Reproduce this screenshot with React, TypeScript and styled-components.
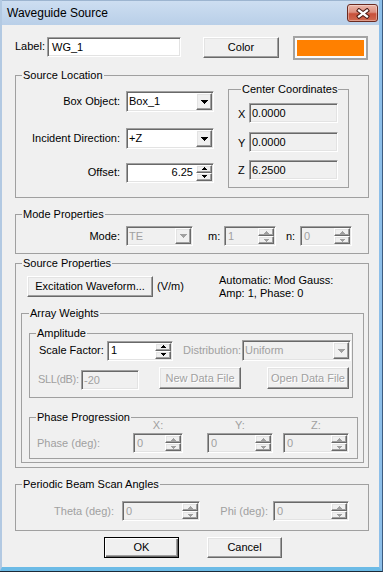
import React from "react";
import styled, { createGlobalStyle, css } from "styled-components";

const GlobalStyle = createGlobalStyle`
  html, body { margin: 0; padding: 0; background: #ffffff; }
  body {
    font-family: "Liberation Sans", Arial, sans-serif;
    font-size: 11px;
    line-height: 13px;
    color: #000;
  }
  #root { width: 383px; height: 572px; }
  *, *::before, *::after { box-sizing: border-box; }
`;

const DISABLED = "#a0a0a0";

const raised = css`
  border: 1px solid;
  border-color: #ffffff #696969 #696969 #ffffff;
  box-shadow: inset -1px -1px 0 #a0a0a0, inset 1px 1px 0 #e3e3e3;
  background: #f0f0f0;
`;

const sunken = css`
  border: 1px solid;
  border-color: #a0a0a0 #ffffff #ffffff #a0a0a0;
  box-shadow: inset 1px 1px 0 #696969, inset -1px -1px 0 #e3e3e3;
`;

const Frame = styled.div`
  width: 383px;
  height: 572px;
  border-right: 1px solid #3d5c80;
  border-bottom: 1px solid #1d2a38;
`;

const Window = styled.div`
  height: 100%;
  display: flex;
  flex-direction: column;
  border-left: 2px solid #b2c9e2;
  border-right: 3px solid #8dbfe9;
  border-bottom: 4px solid #6cbbe6;
  background: #f0f0f0;
`;

const TitleBar = styled.div`
  flex: none;
  height: 25px;
  display: flex;
  align-items: flex-start;
  background: linear-gradient(#cddef1, #b9cfe8);
  border-top: 1px solid #9db5d0;
`;

const TitleText = styled.div`
  padding: 5px 0 0 5px;
  font-size: 12px;
  line-height: 15px;
  color: #000;
`;

const CloseButton = styled.div`
  margin: 3px 1px 0 auto;
  width: 31px;
  height: 18px;
  border: 1px solid #6b2a20;
  border-radius: 3px;
  background: linear-gradient(#ebb7aa 0%, #dc8f7f 45%, #c8503a 55%, #d06a50 100%);
  box-shadow: inset 0 0 0 1px rgba(255, 255, 255, 0.35);
  display: flex;
  align-items: center;
  justify-content: center;
`;

const Client = styled.div`
  flex: 1;
  display: flex;
  flex-direction: column;
  align-items: flex-start;
  padding: 11px 0 0 13px;
`;

const Row = styled.div<{ $mt?: number; $ml?: number; $h?: number; $align?: string }>`
  display: flex;
  align-items: ${(p) => p.$align ?? "center"};
  height: ${(p) => (p.$h ? `${p.$h}px` : "auto")};
  margin: ${(p) => p.$mt ?? 0}px 0 0 ${(p) => p.$ml ?? 0}px;
`;

const Stack = styled.div<{ $mt?: number }>`
  flex: none;
  display: flex;
  flex-direction: column;
  margin-top: ${(p) => p.$mt ?? 0}px;
`;

const GroupBody = styled.div`
  display: flex;
  align-items: flex-start;
`;

const Label = styled.span<{
  $w?: number;
  $align?: "left" | "right" | "center";
  $disabled?: boolean;
  $ml?: number;
  $mt?: number;
  $ls?: number;
}>`
  flex: none;
  width: ${(p) => (p.$w !== undefined ? `${p.$w}px` : "auto")};
  margin-left: ${(p) => p.$ml ?? 0}px;
  margin-top: ${(p) => p.$mt ?? 0}px;
  text-align: ${(p) => p.$align ?? "left"};
  letter-spacing: ${(p) => p.$ls ?? 0}px;
  color: ${(p) => (p.$disabled ? DISABLED : "#000")};
  white-space: nowrap;
`;

const Edit = styled.div<{
  $w: number;
  $h?: number;
  $ml?: number;
  $mt?: number;
  $pl?: number;
  $disabled?: boolean;
  $readOnly?: boolean;
}>`
  ${sunken}
  flex: none;
  width: ${(p) => p.$w}px;
  height: ${(p) => p.$h ?? 20}px;
  margin-left: ${(p) => p.$ml ?? 0}px;
  margin-top: ${(p) => p.$mt ?? 0}px;
  padding: 0 2px 0 ${(p) => p.$pl ?? 2}px;
  display: flex;
  align-items: center;
  background: ${(p) => (p.$disabled || p.$readOnly ? "#f0f0f0" : "#ffffff")};
  color: ${(p) => (p.$disabled ? DISABLED : "#000")};
  white-space: nowrap;
  overflow: hidden;
`;

const ComboBox = styled.div<{ $w: number; $h?: number; $ml?: number; $disabled?: boolean }>`
  ${sunken}
  flex: none;
  width: ${(p) => p.$w}px;
  height: ${(p) => p.$h ?? 21}px;
  margin-left: ${(p) => p.$ml ?? 0}px;
  padding: 1px;
  display: flex;
  align-items: stretch;
  background: ${(p) => (p.$disabled ? "#f0f0f0" : "#ffffff")};
`;

const ComboValue = styled.span<{ $disabled?: boolean }>`
  flex: 1;
  display: flex;
  align-items: center;
  padding-left: 1px;
  color: ${(p) => (p.$disabled ? DISABLED : "#000")};
  white-space: nowrap;
`;

const DropButton = styled.span`
  ${raised}
  flex: none;
  width: 16px;
  display: flex;
  align-items: center;
  justify-content: center;
`;

const SpinBox = styled.div<{ $w: number; $ml?: number; $disabled?: boolean }>`
  ${sunken}
  flex: none;
  width: ${(p) => p.$w}px;
  height: 20px;
  margin-left: ${(p) => p.$ml ?? 0}px;
  padding: 1px;
  display: flex;
  background: ${(p) => (p.$disabled ? "#f0f0f0" : "#ffffff")};
`;

const SpinValue = styled.span<{ $right?: boolean; $disabled?: boolean }>`
  flex: 1;
  display: flex;
  align-items: center;
  justify-content: ${(p) => (p.$right ? "flex-end" : "flex-start")};
  padding: 0 3px 0 2px;
  color: ${(p) => (p.$disabled ? DISABLED : "#000")};
  white-space: nowrap;
`;

const SpinButtons = styled.span`
  flex: none;
  width: 16px;
  display: flex;
  flex-direction: column;
`;

const SpinButton = styled.span`
  ${raised}
  flex: 1;
  display: flex;
  align-items: center;
  justify-content: center;
`;

const PushButton = styled.button<{
  $w: number;
  $h?: number;
  $ml?: number;
  $mt?: number;
  $default?: boolean;
}>`
  ${raised}
  flex: none;
  width: ${(p) => p.$w}px;
  height: ${(p) => p.$h ?? 21}px;
  margin: ${(p) => p.$mt ?? 0}px 0 0 ${(p) => p.$ml ?? 0}px;
  padding: 0;
  font-family: inherit;
  font-size: 11px;
  line-height: 13px;
  color: #000;
  white-space: nowrap;
  ${(p) =>
    p.$default &&
    css`
      border-color: #000;
      box-shadow: inset 1px 1px 0 #ffffff, inset -1px -1px 0 #696969, inset -2px -2px 0 #a0a0a0;
    `}
  &:disabled {
    color: ${DISABLED};
    text-shadow: 1px 1px 0 #ffffff;
  }
`;

const Swatch = styled.div<{ $ml?: number }>`
  flex: none;
  width: 75px;
  height: 24px;
  margin-left: ${(p) => p.$ml ?? 0}px;
  padding: 2px;
  border: 2px solid #a3a3a3;
  background: #fbfbfb;
`;

const SwatchFill = styled.div<{ $color: string }>`
  width: 100%;
  height: 100%;
  background: ${(p) => p.$color};
`;

const Group = styled.fieldset<{ $w: number; $mt?: number; $ml?: number; $pb?: number }>`
  flex: none;
  width: ${(p) => p.$w}px;
  margin: ${(p) => p.$mt ?? 0}px 0 0 ${(p) => p.$ml ?? 0}px;
  padding: 0 0 ${(p) => p.$pb ?? 0}px 0;
  border: 1px solid #a0a0a0;
  min-inline-size: 0;
`;

const Legend = styled.legend<{ $ml?: number }>`
  margin-left: ${(p) => p.$ml ?? 6}px;
  padding: 0 1px;
  height: 13px;
  font-size: 11px;
  line-height: 13px;
  color: #000;
`;

const InfoText = styled.div`
  line-height: 13px;
  white-space: nowrap;
`;

const DownArrow = ({ color = "#000" }: { color?: string }) => (
  <svg width="7" height="4" viewBox="0 0 7 4" shapeRendering="crispEdges">
    <path d="M0 0h7v1h-1v1h-1v1h-1v1h-1v-1h-1v-1h-1v-1h-1z" fill={color} />
  </svg>
);

const SmallArrow = ({ up, color }: { up?: boolean; color: string }) => (
  <svg width="5" height="3" viewBox="0 0 5 3" shapeRendering="crispEdges">
    {up ? (
      <path d="M2 0h1v1h1v1h1v1h-5v-1h1v-1h1z" fill={color} />
    ) : (
      <path d="M0 0h5v1h-1v1h-1v1h-1v-1h-1v-1h-1z" fill={color} />
    )}
  </svg>
);

const Combo = ({ w, h, ml, value, disabled }: { w: number; h?: number; ml?: number; value: string; disabled?: boolean }) => (
  <ComboBox $w={w} $h={h} $ml={ml} $disabled={disabled}>
    <ComboValue $disabled={disabled}>{value}</ComboValue>
    <DropButton>
      <DownArrow color={disabled ? DISABLED : "#000"} />
    </DropButton>
  </ComboBox>
);

const Spin = ({ w, ml, value, disabled, right }: { w: number; ml?: number; value: string; disabled?: boolean; right?: boolean }) => (
  <SpinBox $w={w} $ml={ml} $disabled={disabled}>
    <SpinValue $right={right} $disabled={disabled}>{value}</SpinValue>
    <SpinButtons>
      <SpinButton>
        <SmallArrow up color={disabled ? DISABLED : "#000"} />
      </SpinButton>
      <SpinButton>
        <SmallArrow color={disabled ? DISABLED : "#000"} />
      </SpinButton>
    </SpinButtons>
  </SpinBox>
);

export default function App() {
  return (
    <>
      <GlobalStyle />
      <Frame>
        <Window>
          <TitleBar>
            <TitleText>Waveguide Source</TitleText>
            <CloseButton>
              <svg width="14" height="11" viewBox="0 0 14 11">
                <path d="M3 2.5 L11 8.5 M11 2.5 L3 8.5" stroke="#4a1a14" strokeWidth="4.2" strokeLinecap="square" fill="none" />
                <path d="M3 2.5 L11 8.5 M11 2.5 L3 8.5" stroke="#ffffff" strokeWidth="2.2" strokeLinecap="square" fill="none" />
              </svg>
            </CloseButton>
          </TitleBar>
          <Client>
            <Row $h={24} $align="flex-start">
              <Label $w={32} $mt={4}>Label:</Label>
              <Edit $w={134} $mt={1} $pl={4}>WG_1</Edit>
              <PushButton $w={76} $ml={22} $mt={1}>Color</PushButton>
              <Swatch $ml={14}>
                <SwatchFill $color="#ff8000" />
              </Swatch>
            </Row>

            <Group $w={354} $mt={9} $pb={9}>
              <Legend>Source Location</Legend>
              <GroupBody>
                <Stack $mt={9}>
                  <Row $h={21}>
                    <Label $w={104} $align="right">Box Object:</Label>
                    <Combo w={88} ml={6} value="Box_1" />
                  </Row>
                  <Row $h={21} $mt={16}>
                    <Label $w={104} $align="right">Incident Direction:</Label>
                    <Combo w={88} ml={6} value="+Z" />
                  </Row>
                  <Row $h={21} $mt={13}>
                    <Label $w={104} $align="right">Offset:</Label>
                    <Spin w={88} ml={6} value="6.25" right />
                  </Row>
                </Stack>
                <Group $w={121} $mt={1} $ml={14} $pb={7}>
                  <Legend $ml={12}>Center Coordinates</Legend>
                  <Row $mt={7} $ml={9}>
                    <Label $w={11} $mt={2}>X</Label>
                    <Edit $w={89} $readOnly>0.0000</Edit>
                  </Row>
                  <Row $mt={9} $ml={9}>
                    <Label $w={11} $mt={2}>Y</Label>
                    <Edit $w={89} $readOnly>0.0000</Edit>
                  </Row>
                  <Row $mt={8} $ml={9}>
                    <Label $w={11}>Z</Label>
                    <Edit $w={89} $readOnly>6.2500</Edit>
                  </Row>
                </Group>
              </GroupBody>
            </Group>

            <Group $w={354} $mt={10} $pb={7}>
              <Legend>Mode Properties</Legend>
              <Row $mt={5} $h={20}>
                <Label $w={104} $align="right">Mode:</Label>
                <Combo w={67} h={20} ml={6} value="TE" disabled />
                <Label $w={16} $ml={15}>m:</Label>
                <Spin w={52} value="1" disabled />
                <Label $w={14} $ml={10}>n:</Label>
                <Spin w={52} value="0" disabled />
              </Row>
            </Group>

            <Group $w={354} $mt={3} $pb={4}>
              <Legend>Source Properties</Legend>
              <Row $mt={6} $ml={11} $h={21}>
                <PushButton $w={126}>Excitation Waveform...</PushButton>
                <Label $w={62} $ml={4}>(V/m)</Label>
                <InfoText>
                  Automatic: Mod Gauss:
                  <br />
                  Amp: 1, Phase: 0
                </InfoText>
              </Row>

              <Group $w={343} $mt={10} $ml={5} $pb={3}>
                <Legend $ml={7}>Array Weights</Legend>

                <Group $w={324} $mt={7} $ml={7} $pb={7}>
                  <Legend>Amplitude</Legend>
                  <Row $ml={9} $h={21}>
                    <Label $w={68}>Scale Factor:</Label>
                    <Spin w={66} value="1" />
                    <Label $w={59} $ml={10} $disabled>Distribution:</Label>
                    <Combo w={109} value="Uniform" disabled />
                  </Row>
                  <Row $ml={8} $mt={6} $align="flex-start">
                    <Label $w={43} $mt={6} $ls={-0.35} $disabled>SLL(dB):</Label>
                    <Edit $w={58} $mt={3} $disabled>-20</Edit>
                    <PushButton $w={82} $h={22} $ml={20} disabled>New Data File</PushButton>
                    <PushButton $w={82} $h={22} $ml={26} disabled>Open Data File</PushButton>
                  </Row>
                </Group>

                <Group $w={329} $mt={13} $ml={7} $pb={5}>
                  <Legend>Phase Progression</Legend>
                  <Row $mt={-5} $ml={103} $h={13}>
                    <Label $w={50} $align="center" $disabled>X:</Label>
                    <Label $w={66} $ml={24} $align="center" $disabled>Y:</Label>
                    <Label $w={66} $ml={10} $align="center" $disabled>Z:</Label>
                  </Row>
                  <Row $mt={1} $ml={7} $h={20}>
                    <Label $w={96} $disabled>Phase (deg):</Label>
                    <Spin w={50} value="0" disabled />
                    <Spin w={66} ml={24} value="0" disabled />
                    <Spin w={66} ml={10} value="0" disabled />
                  </Row>
                </Group>
              </Group>
            </Group>

            <Group $w={354} $mt={10} $pb={9}>
              <Legend>Periodic Beam Scan Angles</Legend>
              <Row $mt={10} $h={20}>
                <Label $w={98} $align="right" $disabled>Theta (deg):</Label>
                <Spin w={78} ml={8} value="0" disabled />
                <Label $w={68} $align="right" $disabled>Phi (deg):</Label>
                <Spin w={76} ml={5} value="0" disabled />
              </Row>
            </Group>

            <Row $mt={6} $ml={89}>
              <PushButton $w={75} $default>OK</PushButton>
              <PushButton $w={75} $ml={28}>Cancel</PushButton>
            </Row>
          </Client>
        </Window>
      </Frame>
    </>
  );
}
